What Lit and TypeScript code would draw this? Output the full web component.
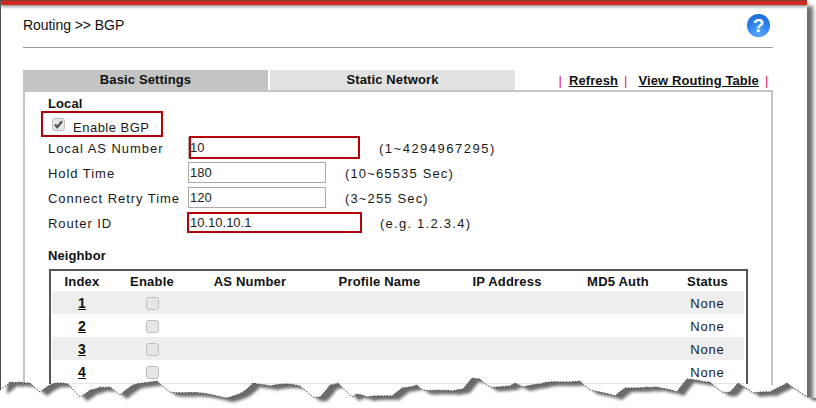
import { LitElement, html, css, svg } from "lit";
import { customElement } from "lit/decorators.js";

const EDGE: [number, number][] = [
  [0, 390], [10, 382], [20, 382], [30, 383], [40, 392], [50, 385], [57, 383], [68, 384], [80, 397], [90, 390],
  [100, 387], [110, 387], [120, 395], [133, 385], [157, 381], [170, 392], [200, 393], [227, 398], [243, 392],
  [253, 383], [270, 386], [287, 384], [300, 386], [313, 397], [320, 397], [330, 385], [338, 383], [352, 397],
  [357, 394], [367, 397], [383, 396], [392, 396], [402, 388], [417, 385], [423, 390], [453, 391], [463, 389],
  [472, 378], [480, 379], [490, 387], [510, 386], [515, 383], [523, 387], [540, 384], [550, 382], [580, 381],
  [590, 390], [615, 396], [625, 388], [647, 387], [657, 387], [677, 392], [687, 379], [710, 382], [722, 392],
  [730, 392], [738, 383], [753, 393], [770, 392], [787, 383], [797, 390], [808, 397],
];

function jagged(): string {
  const out: string[] = [];
  let k = 0;
  for (let i = 0; i < EDGE.length - 1; i++) {
    const [x0, y0] = EDGE[i];
    const [x1, y1] = EDGE[i + 1];
    const steps = Math.max(1, Math.round((x1 - x0) / 4));
    for (let s = 0; s < steps; s++) {
      const t = s / steps;
      const j = s === 0 ? 0 : Math.sin(++k * 12.9898) * 0.5;
      out.push(`${(x0 + (x1 - x0) * t).toFixed(1)},${(y0 + (y1 - y0) * t + j).toFixed(1)}`);
    }
  }
  out.push("808,397");
  return out.join(" ");
}

const ROWS = [1, 2, 3, 4];

@customElement("app-root")
export class AppRoot extends LitElement {
  static styles = css`
    :host {
      display: block;
      width: 816px;
      height: 408px;
      font-family: "Liberation Sans", Arial, sans-serif;
      font-size: 13px;
      color: #1a1a1a;
    }
    .page {
      position: relative;
      width: 816px;
      height: 408px;
      overflow: hidden;
      background: #fff;
    }
    .sheet {
      width: 807px;
      height: 440px;
      box-sizing: border-box;
      border-left: 1px solid #4a4a4a;
      background: #fff;
      box-shadow: 6px 6px 4px #6e6e6e;
    }
    .topbar {
      height: 5px;
      background: #d02a20;
      border-top: 1px solid #8a3a34;
      box-sizing: border-box;
      box-shadow: 0 2px 3px #999;
    }
    .content {
      width: 750px;
      margin-left: 22px;
    }
    .head {
      height: 42px;
      border-bottom: 1px solid #9a9a9a;
      display: flex;
      align-items: center;
      justify-content: space-between;
    }
    .title {
      font-size: 14px;
      letter-spacing: -0.05px;
      position: relative;
      top: -1px;
      color: #111;
    }
    .help {
      width: 23px;
      height: 23px;
      border-radius: 50%;
      margin-right: 3px;
      position: relative;
      top: -1px;
      background: radial-gradient(circle at 50% 85%, #5aa8ff 0%, #2b83ee 50%, #1a63cf 100%);
      color: #fff;
      font-weight: bold;
      font-size: 19px;
      line-height: 23px;
      text-align: center;
    }
    .tabbar {
      margin-top: 22px;
      height: 20px;
      display: flex;
      gap: 2px;
    }
    .tab {
      flex: none;
      width: 245px;
      height: 20px;
      line-height: 20px;
      text-align: center;
      font-weight: bold;
      letter-spacing: 0.12px;
      background: #e2e2e2;
      color: #111;
    }
    .tab.on {
      background: #c4c4c4;
    }
    .links {
      flex: none;
      display: flex;
      align-items: center;
      white-space: nowrap;
      font-weight: bold;
      letter-spacing: 0.1px;
      color: #111;
      padding-left: 41.5px;
    }
    .links a {
      color: #111;
      text-decoration: underline;
    }
    .bar {
      color: #e0186a;
      font-weight: normal;
      letter-spacing: 0;
    }
    .gap-a {
      margin-left: 7px;
    }
    .gap-b {
      margin-left: 6px;
    }
    .gap-c {
      margin-left: 11px;
    }
    .panel {
      border: 2px solid #c4c4c4;
      border-bottom: none;
      height: 295px;
      box-sizing: border-box;
      width: 750px;
      padding-left: 23px;
    }
    .sec {
      height: 20px;
      line-height: 20px;
      font-weight: bold;
      letter-spacing: 0.1px;
      margin-top: 2px;
      color: #111;
    }
    .en {
      height: 22px;
      display: flex;
      align-items: center;
      gap: 8px;
      padding-left: 4px;
      letter-spacing: 0.5px;
      position: relative;
    }
    .cb {
      width: 13px;
      height: 13px;
      box-sizing: border-box;
      border: 1px solid #bdbdbd;
      border-radius: 3px;
      background: #e6e6e6;
      display: block;
    }
    .cb svg {
      display: block;
      width: 11px;
      height: 11px;
    }
    .en .cb {
      position: relative;
      top: -1px;
    }
    .en span.t {
      position: relative;
      top: 2px;
    }
    .mark {
      position: absolute;
      border: 2px solid #b3000a;
      box-sizing: border-box;
      pointer-events: none;
    }
    .m-en {
      left: -7px;
      top: -3px;
      width: 122px;
      height: 26px;
    }
    .m-as {
      left: 1px;
      top: -1px;
      width: 171px;
      height: 23px;
    }
    .m-id {
      left: -1px;
      top: 0;
      width: 175px;
      height: 21px;
    }
    .row {
      height: 25px;
      display: flex;
      align-items: center;
      letter-spacing: 0.95px;
    }
    .lbl {
      width: 140px;
      flex: none;
    }
    .iw {
      position: relative;
      width: 138px;
      height: 21px;
      flex: none;
      margin-bottom: 2px;
    }
    input {
      display: block;
      width: 138px;
      height: 21px;
      box-sizing: border-box;
      border: 1px solid #ababab;
      padding: 0 1px;
      margin: 0;
      font: inherit;
      font-size: 13px;
      letter-spacing: 0;
      color: #222;
      background: #fff;
      outline: none;
    }
    input.open {
      border-top: none;
      border-right: none;
    }
    input.bare {
      border: none;
      padding-left: 2px;
    }
    .hint {
      margin-left: 19px;
      letter-spacing: 1.15px;
    }
    .hint.n {
      margin-left: 53px;
      letter-spacing: 1.5px;
    }
    .hint.e {
      margin-left: 54px;
      letter-spacing: 1.25px;
    }
    .sec.nb {
      margin-top: 10px;
    }
    .tbl {
      margin: 3px 0 0 1px;
      width: 699px;
      box-sizing: border-box;
      border: 2px solid #555;
      border-bottom: none;
      padding: 0 2px 0 1px;
    }
    .tr {
      display: grid;
      grid-template-columns: 60px 80px 116px 143px 112px 110px 69px;
      height: 23px;
      box-sizing: border-box;
      padding-top: 1px;
      align-items: center;
      justify-items: center;
    }
    .tr.hd {
      height: 20px;
      font-weight: bold;
      letter-spacing: 0.2px;
      color: #111;
    }
    .tr.g {
      background: #eee;
    }
    .tr.e {
      height: 24px;
      border-bottom: 1px solid #e6e6e6;
    }
    .idx {
      font-weight: bold;
      font-size: 14px;
      text-decoration: underline;
      color: #111;
    }
    .st {
      letter-spacing: 0.8px;
    }
    .tear {
      position: absolute;
      left: 0;
      top: 0;
      width: 816px;
      height: 408px;
    }
  `;

  render() {
    const edge = jagged();
    const above = `0,0 816,0 816,397 ${[...edge.split(" ")].reverse().join(" ")}`;
    const below = `${edge} 808,397 816,398 816,408 0,408`;
    return html`
      <div class="page">
        <div class="sheet">
          <div class="topbar"></div>
          <div class="content">
            <div class="head">
              <div class="title">Routing &gt;&gt; BGP</div>
              <div class="help">?</div>
            </div>
            <div class="tabbar">
              <div class="tab on">Basic Settings</div>
              <div class="tab">Static Network</div>
              <div class="links">
                <span class="bar">|</span><a class="gap-a">Refresh</a><span class="bar gap-b">|</span><a class="gap-c">View Routing Table</a><span class="bar gap-b">|</span>
              </div>
            </div>
            <div class="panel">
              <div class="sec">Local</div>
              <div class="en">
                <span class="cb"><svg viewBox="0 0 11 11"><path d="M2 5.5 L4.3 8.2 L9 2.2" fill="none" stroke="#555" stroke-width="2.2"/></svg></span>
                <span class="t">Enable BGP</span>
                <div class="mark m-en"></div>
              </div>
              <div class="row">
                <div class="lbl">Local AS Number</div>
                <div class="iw"><input class="open" value="10" /><div class="mark m-as"></div></div>
                <div class="hint n">(1~4294967295)</div>
              </div>
              <div class="row">
                <div class="lbl">Hold Time</div>
                <div class="iw"><input value="180" /></div>
                <div class="hint">(10~65535 Sec)</div>
              </div>
              <div class="row">
                <div class="lbl">Connect Retry Time</div>
                <div class="iw"><input value="120" /></div>
                <div class="hint">(3~255 Sec)</div>
              </div>
              <div class="row">
                <div class="lbl">Router ID</div>
                <div class="iw"><input class="bare" value="10.10.10.1" /><div class="mark m-id"></div></div>
                <div class="hint e">(e.g. 1.2.3.4)</div>
              </div>
              <div class="sec nb">Neighbor</div>
              <div class="tbl">
                <div class="tr hd">
                  <div>Index</div><div>Enable</div><div>AS Number</div><div>Profile Name</div><div>IP Address</div><div>MD5 Auth</div><div>Status</div>
                </div>
                ${ROWS.map(
                  (n) => html`
                    <div class="tr ${n % 2 ? "g" : ""} ${n === 4 ? "e" : ""}">
                      <div class="idx">${n}</div>
                      <div><span class="cb"></span></div>
                      <div></div><div></div><div></div><div></div>
                      <div class="st">None</div>
                    </div>
                  `
                )}
              </div>
            </div>
          </div>
        </div>
        <svg class="tear" viewBox="0 0 816 408">
          <defs>
            <clipPath id="below"><polygon points="${below}"></polygon></clipPath>
            <filter id="b" x="-5%" y="-5%" width="110%" height="110%"><feGaussianBlur stdDeviation="1.6"></feGaussianBlur></filter>
          </defs>
          ${svg`
            <g clip-path="url(#below)">
              <rect width="816" height="408" fill="#fff"></rect>
              <polygon points="${above}" transform="translate(7 4)" fill="#6a6a6a" filter="url(#b)"></polygon>
            </g>
            <polyline points="${edge}" fill="none" stroke="#444" stroke-width="1" stroke-dasharray="1.5 1.5"></polyline>
          `}
        </svg>
      </div>
    `;
  }
}
